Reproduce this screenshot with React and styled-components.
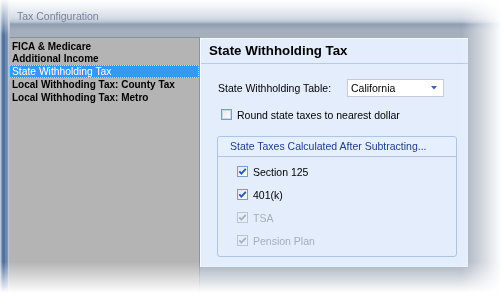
import React from "react";
import styled, { createGlobalStyle } from "styled-components";

const GlobalStyle = createGlobalStyle`
  body {
    margin: 0;
    background: #ffffff;
    font-family: "Liberation Sans", Arial, sans-serif;
  }
`;

const FadeRight = styled.div`
  width: 504px;
  height: 296px;
  overflow: hidden;
  -webkit-mask-image: linear-gradient(to right, #000 462px, transparent 502px);
  mask-image: linear-gradient(to right, #000 462px, transparent 502px);
`;

const Frame = styled.div`
  width: 504px;
  height: 296px;
  display: flex;
  background: #a6afbc;
  -webkit-mask-image: linear-gradient(to bottom, #000 262px, transparent 293px);
  mask-image: linear-gradient(to bottom, #000 262px, transparent 293px);
`;

const Stripes = styled.div`
  width: 10px;
  flex-shrink: 0;
  background:
    linear-gradient(to bottom, rgba(255, 255, 255, 0.95) 0, rgba(255, 255, 255, 0.45) 20px, rgba(255, 255, 255, 0) 36px),
    linear-gradient(
      to right,
      #d3dbe6 0,
      #9fb1c9 1px,
      #6a87b0 2px,
      #4c6b9b 3px,
      #56759f 5px,
      #7b96bb 6px,
      #5c7aa6 7px,
      #9db0c9 8px,
      #c9d3df 9px,
      #8d9bb0 10px
    );
`;

const Main = styled.div`
  flex: 1;
  display: flex;
  flex-direction: column;
`;

const TitleBar = styled.div`
  height: 37px;
  box-sizing: border-box;
  padding: 11px 0 0 7px;
  font-size: 10.5px;
  line-height: 11px;
  color: #74849e;
  background: linear-gradient(
    to bottom,
    #ffffff 0,
    #eff2f6 8px,
    #d6dce5 18px,
    #bac4d2 22px,
    #8f9eb4 24px,
    #98a5b8 27px,
    #a4aebc 30px,
    #a6afbc 37px
  );
`;

const Body = styled.div`
  flex: 1;
  display: flex;
  align-items: flex-start;
`;

const List = styled.div`
  width: 189px;
  align-self: stretch;
  background: #b4b4b4;
  border-top: 1px solid #8592a6;
  border-right: 1px solid #8995a7;
  padding-top: 1.5px;
`;

const ListItem = styled.div`
  height: 12.75px;
  line-height: 12.75px;
  box-sizing: border-box;
  padding-left: 2px;
  white-space: nowrap;
  font-size: ${(p) => (p.$selected ? "10.3px" : "10px")};
  font-weight: ${(p) => (p.$selected ? "normal" : "bold")};
  color: ${(p) => (p.$selected ? "#ffffff" : "#000000")};
  background: ${(p) => (p.$selected ? "#3399ff" : "transparent")};
  border: 1px dotted ${(p) => (p.$selected ? "#f4d28a" : "transparent")};
  border-left: none;
  padding-top: 0;
  line-height: 11px;
`;

const Panel = styled.div`
  width: 268px;
  height: 229px;
  margin-top: 1px;
  box-sizing: border-box;
  background: #e3edfc;
  border-left: 1px solid #f5f9ff;
`;

const PanelHeader = styled.div`
  height: 26px;
  box-sizing: border-box;
  border-top: 1px solid #f6f9fe;
  border-bottom: 1px solid #b7cbe7;
  padding-left: 8px;
  font-size: 13.3px;
  font-weight: bold;
  line-height: 24px;
  color: #000000;
`;

const Content = styled.div`
  padding: 15px 0 0 17px;
  font-size: 10.5px;
  color: #000000;
`;

const TableRow = styled.div`
  display: flex;
  align-items: center;
  height: 18px;
`;

const Label = styled.span`
  width: 129px;
  white-space: nowrap;
`;

const Dropdown = styled.div`
  width: 97px;
  height: 18px;
  box-sizing: border-box;
  border: 1px solid #c5ccd6;
  background: #ffffff;
  display: flex;
  align-items: center;
  justify-content: space-between;
  padding: 0 6px 0 3px;
`;

const CheckRow = styled.div`
  display: flex;
  align-items: center;
  gap: 5px;
  height: ${(p) => p.$h || "11px"};
  margin-top: ${(p) => p.$mt || "0"};
  padding-left: ${(p) => p.$pl || "0"};
  color: ${(p) => (p.$disabled ? "#a3afc0" : "#000000")};
  white-space: nowrap;
`;

const Box = styled.span`
  width: 11px;
  height: 11px;
  flex-shrink: 0;
  box-sizing: border-box;
  display: flex;
  align-items: center;
  justify-content: center;
  border: 1px solid ${(p) => (p.$disabled ? "#b9c5d4" : "#7c9bc9")};
  background: ${(p) =>
    p.$disabled
      ? "#e8eef7"
      : "linear-gradient(135deg, #dfe8f5 0%, #ffffff 100%)"};
  box-shadow: ${(p) => (p.$checked ? "none" : "inset 0 0 0 1px #c9d8ee")};
`;

const Group = styled.div`
  margin: 16px 0 0 -1px;
  width: 240px;
  height: 121px;
  box-sizing: border-box;
  border: 1px solid #adc4e4;
  border-radius: 3px;
`;

const GroupHeader = styled.div`
  height: 20px;
  box-sizing: border-box;
  border-bottom: 1px solid #b2c7e5;
  padding-left: 12px;
  line-height: 19px;
  color: #1f3d87;
  background: #e5effd;
  border-radius: 3px 3px 0 0;
`;

const GroupBody = styled.div`
  padding: 3px 0 0 19px;
`;

function Check({ checked, disabled }) {
  return (
    <Box $checked={checked} $disabled={disabled}>
      {checked && (
        <svg width="9" height="9" viewBox="0 0 9 9">
          <path
            d="M1.3 4.3 L3.4 6.6 L7.8 1.8"
            fill="none"
            stroke={disabled ? "#a7b4c5" : "#2459b3"}
            strokeWidth="1.9"
          />
        </svg>
      )}
    </Box>
  );
}

function Arrow() {
  return (
    <svg width="6" height="4" viewBox="0 0 6 4">
      <path d="M0 0 H6 L3 3.5 Z" fill="#3b67a8" />
    </svg>
  );
}

const items = [
  "FICA & Medicare",
  "Additional Income",
  "State Withholding Tax",
  "Local Withhoding Tax: County Tax",
  "Local Withhoding Tax: Metro",
];

const deductions = [
  { name: "Section 125", disabled: false },
  { name: "401(k)", disabled: false },
  { name: "TSA", disabled: true },
  { name: "Pension Plan", disabled: true },
];

export default function App() {
  return (
    <>
      <GlobalStyle />
      <FadeRight>
        <Frame>
          <Stripes />
          <Main>
            <TitleBar>Tax Configuration</TitleBar>
            <Body>
              <List>
                {items.map((it, i) => (
                  <ListItem key={it} $selected={i === 2}>
                    {it}
                  </ListItem>
                ))}
              </List>
              <Panel>
                <PanelHeader>State Withholding Tax</PanelHeader>
                <Content>
                  <TableRow>
                    <Label>State Withholding Table:</Label>
                    <Dropdown>
                      <span>California</span>
                      <Arrow />
                    </Dropdown>
                  </TableRow>
                  <CheckRow $mt="12px" $pl="3px">
                    <Check checked={false} />
                    <span>Round state taxes to nearest dollar</span>
                  </CheckRow>
                  <Group>
                    <GroupHeader>State Taxes Calculated After Subtracting...</GroupHeader>
                    <GroupBody>
                      {deductions.map((d) => (
                        <CheckRow key={d.name} $h="23px" $disabled={d.disabled}>
                          <Check checked disabled={d.disabled} />
                          <span>{d.name}</span>
                        </CheckRow>
                      ))}
                    </GroupBody>
                  </Group>
                </Content>
              </Panel>
            </Body>
          </Main>
        </Frame>
      </FadeRight>
    </>
  );
}
